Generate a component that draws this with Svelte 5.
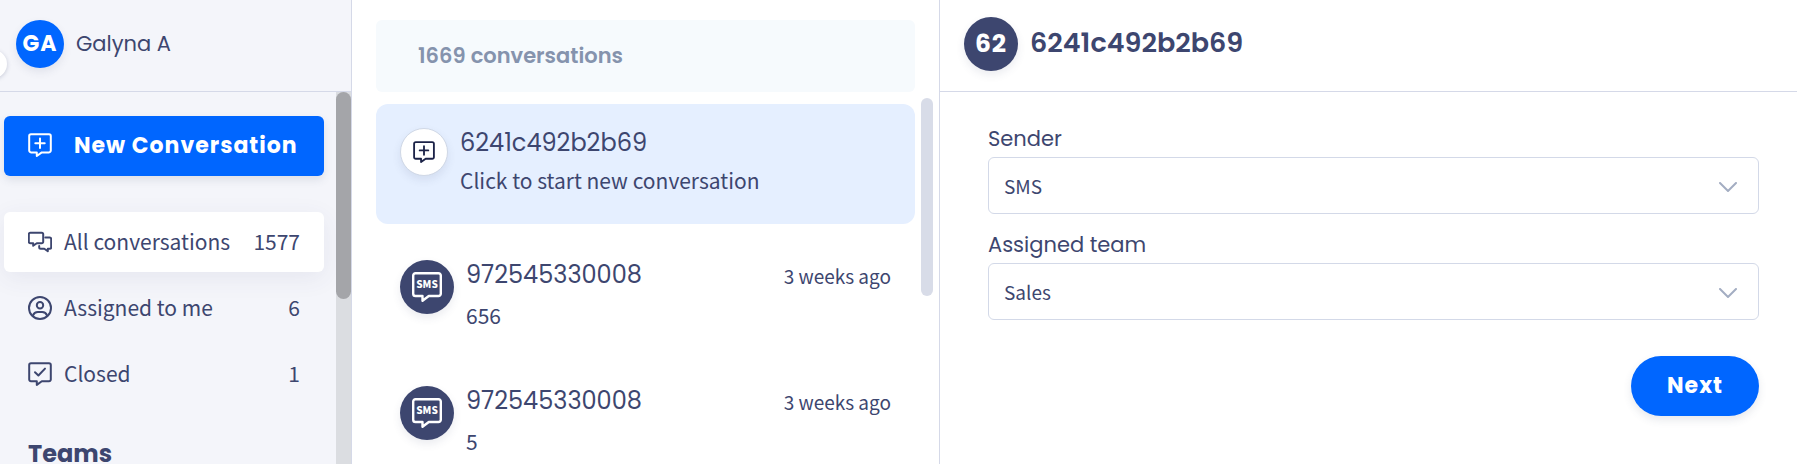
<script lang="ts">
  const folders = [
    { id: 'all', label: 'All conversations', count: 1577 },
    { id: 'mine', label: 'Assigned to me', count: 6 },
    { id: 'closed', label: 'Closed', count: 1 }
  ] as const;

  const conversations = [
    { id: 1, title: '972545330008', preview: '656', time: '3 weeks ago' },
    { id: 2, title: '972545330008', preview: '5', time: '3 weeks ago' }
  ];

  let activeFolder = $state<'all' | 'mine' | 'closed'>('all');
  let sender = $state('SMS');
  let team = $state('Sales');
</script>

{#snippet plusBubble()}
  <path d="M3 1.2h18a1.8 1.8 0 0 1 1.8 1.8v14.6a1.8 1.8 0 0 1-1.8 1.8h-7.2l-5 3.6v-3.6H3a1.8 1.8 0 0 1-1.8-1.8V3A1.8 1.8 0 0 1 3 1.2z" />
  <path d="M12 5.6v9.4M7.3 10.3h9.4" />
{/snippet}

{#snippet chevron()}
  <svg class="chevron" viewBox="0 0 18 10" aria-hidden="true">
    <path d="M1 1l8 8 8-8" />
  </svg>
{/snippet}

<div class="inbox">
  <aside class="sidebar">
    <div class="collapse-handle"></div>
    <header class="profile">
      <span class="avatar user">GA</span>
      <span class="user-name">Galyna A</span>
    </header>
    <div class="sidebar-body">
      <div class="sidebar-content">
        <button type="button" class="new-button">
          <svg class="icon" viewBox="0 0 24 24" aria-hidden="true">{@render plusBubble()}</svg>
          <span>New Conversation</span>
        </button>
        <nav class="folders">
          {#each folders as folder (folder.id)}
            <button
              type="button"
              class="folder"
              class:active={activeFolder === folder.id}
              onclick={() => activeFolder = folder.id}
            >
              <svg class="icon" viewBox="0 0 24 24" aria-hidden="true">
                {#if folder.id === 'all'}
                  <path d="M2.3 2.8h11.4a1.5 1.5 0 0 1 1.5 1.5v7.4a1.5 1.5 0 0 1-1.5 1.5H8.800l-3.600 2.600v-2.600H2.300a1.500 1.500 0 0 1-1.500-1.500V4.300a1.500 1.500 0 0 1 1.500-1.500z" />
                  <path d="M17.300 7.600h4.400a1.500 1.500 0 0 1 1.500 1.500v8.200a1.500 1.500 0 0 1-1.500 1.500h-1.900v2.400l-3.500-2.400h-3.600a1.500 1.500 0 0 1-1.500-1.500v-1.200" />
                {:else if folder.id === 'mine'}
                  <circle cx="12" cy="12" r="11" />
                  <circle cx="12" cy="9.3" r="3.2" />
                  <path d="M5 19.400c1-2.700 3-3.300 4.800-3.300h4.400c1.800 0 3.800.6 4.800 3.300" />
                {:else}
                  <path d="M3 1.200h18a1.800 1.800 0 0 1 1.800 1.800v14.400a1.800 1.800 0 0 1-1.800 1.800h-7.200l-5 3.700v-3.700H3a1.800 1.800 0 0 1-1.800-1.800V3A1.800 1.800 0 0 1 3 1.200z" />
                  <path d="M7 10.300l3.400 3.200 6.600-6.900" />
                {/if}
              </svg>
              <span class="folder-label">{folder.label}</span>
              <span class="folder-count">{folder.count}</span>
            </button>
          {/each}
        </nav>
        <h2>Teams</h2>
      </div>
      <div class="sidebar-track"><div class="sidebar-thumb"></div></div>
    </div>
  </aside>

  <section class="list">
    <div class="list-content">
      <div class="summary">1669 conversations</div>
      <button type="button" class="row draft">
        <span class="avatar start">
          <svg class="icon" viewBox="0 0 24 24" aria-hidden="true">{@render plusBubble()}</svg>
        </span>
        <span class="row-text">
          <span class="row-title">6241c492b2b69</span>
          <span class="draft-hint">Click to start new conversation</span>
        </span>
      </button>
      {#each conversations as conversation (conversation.id)}
        <button type="button" class="row">
          <span class="avatar">
            <svg class="sms" viewBox="0 0 30 30" aria-hidden="true">
              <path d="M3.5 1.2h23a2.3 2.3 0 0 1 2.3 2.3v18.200a2.300 2.300 0 0 1-2.300 2.300h-9.700l-6.300 4.800V24h-7a2.300 2.300 0 0 1-2.300-2.300V3.500a2.300 2.300 0 0 1 2.300-2.300z" />
              <text x="15" y="16" text-anchor="middle">SMS</text>
            </svg>
          </span>
          <span class="row-text">
            <span class="row-title">{conversation.title}</span>
            <span class="preview">{conversation.preview}</span>
          </span>
          <time>{conversation.time}</time>
        </button>
      {/each}
    </div>
    <div class="list-thumb"></div>
  </section>

  <main class="detail">
    <header class="detail-header">
      <span class="avatar">62</span>
      <h1>6241c492b2b69</h1>
    </header>
    <form class="form" onsubmit={(e) => e.preventDefault()}>
      <div class="field">
        <label for="sender">Sender</label>
        <div class="select-box">
          <select id="sender" bind:value={sender}>
            <option>SMS</option>
          </select>
          {@render chevron()}
        </div>
      </div>
      <div class="field">
        <label for="team">Assigned team</label>
        <div class="select-box">
          <select id="team" bind:value={team}>
            <option>Sales</option>
          </select>
          {@render chevron()}
        </div>
      </div>
      <button type="submit" class="next">Next</button>
    </form>
  </main>
</div>

<style>
  :global(body) {
    background: #fff;
  }

  .inbox {
    --ink: #3d466f;
    --blue: #06f;
    --line: #d5d9e8;
    --heading: Poppins, Inter, sans-serif;
    --text: 'Source Sans Pro', 'Noto Sans CJK SC', sans-serif;
    display: grid;
    grid-template-columns: 352px 588px minmax(0, 1fr);
    height: 100vh;
    overflow: hidden;
    color: var(--ink);
    font-family: var(--text);
  }

  .inbox *,
  .inbox {
    box-sizing: border-box;
  }

  button {
    border: none;
    background: transparent;
    color: inherit;
    font-family: inherit;
    cursor: pointer;
  }

  h1,
  h2 {
    margin: 0;
    font-family: var(--heading);
  }

  .icon {
    width: 24px;
    height: 24px;
    flex-shrink: 0;
    fill: none;
    stroke: currentColor;
    stroke-width: 2;
    stroke-linecap: round;
    stroke-linejoin: round;
  }

  .avatar {
    display: flex;
    align-items: center;
    justify-content: center;
    flex-shrink: 0;
    width: 54px;
    height: 54px;
    border-radius: 50%;
    background: var(--ink);
    color: #fff;
    font-family: var(--heading);
    font-weight: 700;
    font-size: 25px;
    letter-spacing: 1px;
    box-shadow: 0 4px 8px rgba(61, 70, 111, 0.1);
  }

  /* Sidebar */
  .sidebar {
    position: relative;
    display: flex;
    flex-direction: column;
    min-height: 0;
    background: #f4f5fa;
    border-right: 1px solid var(--line);
  }

  .collapse-handle {
    position: absolute;
    top: 50px;
    left: -21px;
    width: 28px;
    height: 28px;
    border-radius: 50%;
    background: #fff;
    box-shadow: 0 1px 4px rgba(61, 70, 111, 0.25);
  }

  .profile {
    display: flex;
    align-items: center;
    gap: 12px;
    height: 92px;
    padding: 0 16px 4px;
    flex-shrink: 0;
    border-bottom: 1px solid var(--line);
  }

  .avatar.user {
    width: 48px;
    height: 48px;
    background: var(--blue);
    font-size: 22px;
  }

  .user-name {
    font-family: var(--heading);
    font-size: 21px;
    font-weight: 400;
  }

  .sidebar-body {
    display: flex;
    flex: 1;
    min-height: 0;
  }

  .sidebar-content {
    flex: 1;
    padding: 24px 12px 0 4px;
    overflow: hidden;
  }

  .sidebar-track {
    width: 15px;
    background: #dbdde1;
  }

  .sidebar-thumb {
    height: 207px;
    border-radius: 8px;
    background: #a4a5a9;
  }

  .new-button {
    display: flex;
    align-items: center;
    gap: 22px;
    width: 100%;
    height: 60px;
    padding: 0 24px 2px;
    border-radius: 6px;
    background: var(--blue);
    color: #fff;
    font-family: var(--heading);
    font-size: 22px;
    font-weight: 700;
    letter-spacing: 1px;
    white-space: nowrap;
    box-shadow: 0 4px 8px rgba(61, 70, 111, 0.12);
  }

  .folders {
    display: flex;
    flex-direction: column;
    gap: 6px;
    margin: 36px 0 34px;
  }

  .folder {
    display: flex;
    align-items: center;
    gap: 12px;
    height: 60px;
    padding: 0 24px;
    border-radius: 6px;
    font-size: 21px;
    line-height: 32px;
    text-align: left;
    white-space: nowrap;
  }

  .folder.active {
    background: #fff;
    box-shadow: 0 6px 24px rgba(61, 70, 111, 0.08);
  }

  .folder-label,
  .folder-count {
    padding-bottom: 2px;
  }

  .folder-label {
    flex: 1;
  }

  h2 {
    padding-left: 24px;
    font-size: 24px;
    line-height: 32px;
    font-weight: 700;
  }

  /* Conversation list */
  .list {
    display: flex;
    gap: 6px;
    min-height: 0;
    padding: 20px 6px 0 24px;
    border-right: 1px solid var(--line);
    overflow: hidden;
  }

  .list-content {
    flex: 1;
  }

  .list-thumb {
    width: 12px;
    height: 198px;
    margin-top: 78px;
    border-radius: 6px;
    background: #d8dce8;
  }

  .summary {
    height: 72px;
    padding: 0 42px;
    border-radius: 6px;
    background: #f6fafd;
    color: #8593ad;
    font-family: var(--heading);
    font-size: 21px;
    line-height: 72px;
    font-weight: 600;
  }

  .row {
    display: flex;
    align-items: flex-start;
    gap: 12px;
    width: 100%;
    height: 126px;
    padding: 24px;
    text-align: left;
  }

  .draft {
    height: 120px;
    margin: 12px 0;
    border-radius: 12px;
    background: #e5efff;
  }

  .avatar.start {
    width: 48px;
    height: 48px;
    border: 1px solid #d0d8e6;
    background: #fff;
    color: #1c2348;
  }

  .start .icon {
    width: 22px;
    height: 22px;
  }

  .sms {
    width: 30px;
    height: 30px;
  }

  .sms path {
    fill: none;
    stroke: #fff;
    stroke-width: 2.4;
    stroke-linejoin: round;
  }

  .sms text {
    fill: #fff;
    font-family: 'Noto Sans CJK SC', sans-serif;
    font-size: 10px;
    font-weight: 900;
    letter-spacing: 0;
  }

  .row-text {
    display: flex;
    flex: 1;
    flex-direction: column;
  }

  .row-title {
    font-family: var(--heading);
    font-size: 24px;
    line-height: 30px;
    font-weight: 400;
  }

  .draft-hint {
    margin-top: 6px;
    font-size: 21px;
    line-height: 32px;
  }

  .preview {
    margin-top: 9px;
    font-size: 21px;
    line-height: 32px;
  }

  time {
    font-size: 19px;
    line-height: 32px;
  }

  /* Details */
  .detail-header {
    display: flex;
    align-items: center;
    gap: 12px;
    height: 92px;
    padding: 0 24px 3px;
    border-bottom: 1px solid var(--line);
  }

  h1 {
    padding-bottom: 2px;
    font-size: 27px;
    font-weight: 600;
  }

  .form {
    display: flex;
    flex-direction: column;
    gap: 15px;
    padding: 31px 38px 0 48px;
  }

  label {
    display: block;
    margin-bottom: 2px;
    font-family: var(--heading);
    font-size: 21px;
    line-height: 32px;
  }

  .select-box {
    position: relative;
  }

  select {
    display: block;
    width: 100%;
    height: 57px;
    padding: 0 48px 0 15px;
    border: 1px solid #d3d9e8;
    border-radius: 6px;
    appearance: none;
    background: #fff;
    color: inherit;
    font-family: inherit;
    font-size: 19px;
  }

  .chevron {
    position: absolute;
    top: 25px;
    right: 22px;
    width: 18px;
    height: 10px;
    fill: none;
    stroke: #a3adc2;
    stroke-width: 2;
    stroke-linecap: round;
    pointer-events: none;
  }

  .next {
    align-self: flex-end;
    height: 60px;
    margin-top: 21px;
    padding: 0 36px 2px;
    border-radius: 30px;
    background: var(--blue);
    color: #fff;
    font-family: var(--heading);
    font-size: 22px;
    font-weight: 700;
    letter-spacing: 1px;
    box-shadow: 0 4px 8px rgba(61, 70, 111, 0.12);
  }
</style>
